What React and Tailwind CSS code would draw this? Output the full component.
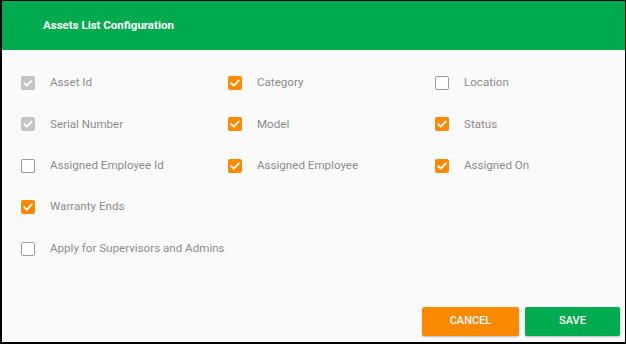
import React from "react";

const Check = () => (
  <svg viewBox="0 0 14 14" className="w-[14px] h-[14px]">
    <path d="M3.2 7.2 L5.8 9.7 L10.8 4.4" fill="none" stroke="white" strokeWidth="1.8" strokeLinecap="round" strokeLinejoin="round" />
  </svg>
);

function Box({ state }) {
  if (state === "disabled")
    return (
      <div className="w-[14px] h-[14px] rounded-[2px] bg-[#c4c4c4] flex items-center justify-center shrink-0">
        <Check />
      </div>
    );
  if (state === "on")
    return (
      <div className="w-[14px] h-[14px] rounded-[2px] bg-[#fb8a00] flex items-center justify-center shrink-0">
        <Check />
      </div>
    );
  return <div className="w-[14px] h-[14px] rounded-[2px] border-[1.5px] border-[#9a9a9a] bg-white shrink-0" />;
}

function Item({ label, state }) {
  return (
    <div className="flex items-center h-[14px]">
      <Box state={state} />
      <span className="ml-[15px] text-[11.6px] text-[#8c8c8c] leading-none whitespace-nowrap">{label}</span>
    </div>
  );
}

export default function App() {
  const rows = [
    [["Asset Id", "disabled"], ["Category", "on"], ["Location", "off"]],
    [["Serial Number", "disabled"], ["Model", "on"], ["Status", "on"]],
    [["Assigned Employee Id", "off"], ["Assigned Employee", "on"], ["Assigned On", "on"]],
    [["Warranty Ends", "on"]],
    [["Apply for Supervisors and Admins", "off"]],
  ];
  return (
    <div className="w-[626px] h-[344px] border-t border-l-2 border-r border-b-2 border-black bg-[#fafafa] flex flex-col overflow-hidden" style={{ fontFamily: "Roboto, sans-serif" }}>
      <div className="h-[49px] bg-[#00aa4f] flex items-center pl-[41px] shrink-0">
        <span className="text-white font-bold text-[11.5px]">Assets List Configuration</span>
      </div>
      <div className="pl-[19px] pt-[26px] flex flex-col gap-[27.4px]">
        {rows.map((r, i) => (
          <div key={i} className="grid grid-cols-[207px_207px_1fr]">
            {r.map(([l, s]) => (
              <Item key={l} label={l} state={s} />
            ))}
          </div>
        ))}
      </div>
      <div className="mt-auto flex justify-end gap-[6px] pr-[5px] pb-[6px]">
        <button className="w-[97px] h-[29px] bg-[#fb8a00] text-white text-[11px] font-medium rounded-[2px] shadow-[0_1px_2px_rgba(0,0,0,0.25)]">CANCEL</button>
        <button className="w-[95px] h-[29px] bg-[#00aa4f] text-white text-[11px] font-medium rounded-[2px] shadow-[0_1px_2px_rgba(0,0,0,0.25)]">SAVE</button>
      </div>
    </div>
  );
}
